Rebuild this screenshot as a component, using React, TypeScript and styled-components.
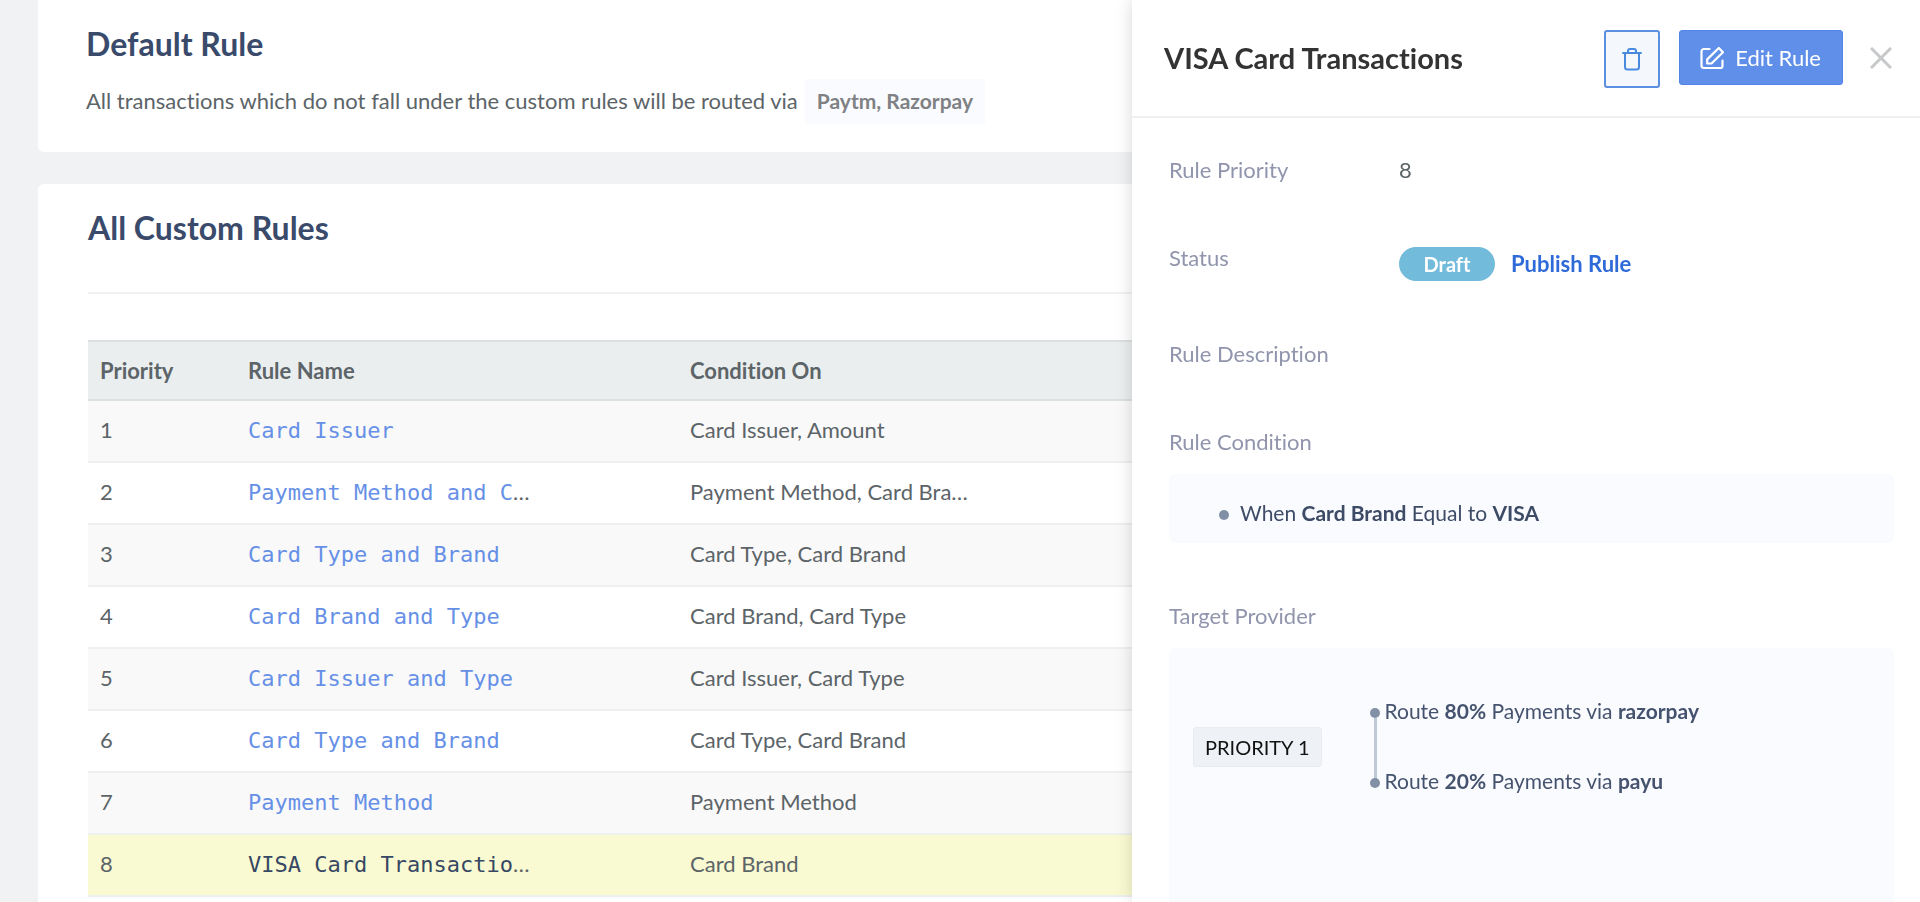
import React from "react";
import styled, { createGlobalStyle } from "styled-components";

const GlobalStyle = createGlobalStyle`
  *, *::before, *::after { box-sizing: border-box; }
  body {
    margin: 0;
    background: #f0f2f4;
    color: #5c6468;
    font-family: Lato, "Liberation Sans", sans-serif;
    font-size: 22px;
    line-height: 30px;
    font-variant-ligatures: none;
    overflow-x: hidden;
  }
  button { font: inherit; font-variant-ligatures: none; cursor: pointer; }
`;

const Page = styled.main`
  display: flex;
  flex-direction: column;
  gap: 32px;
  min-height: 100vh;
  padding: 0 38px;
`;

const Card = styled.section<{ $first?: boolean }>`
  flex: ${(p) => (p.$first ? "none" : "1")};
  background: #fff;
  border-radius: ${(p) => (p.$first ? "0 0 6px 6px" : "6px 6px 0 0")};
  padding: ${(p) => (p.$first ? "24px 48px 28px" : "24px 50px 0")};
`;

const CardTitle = styled.h2`
  margin: 0;
  font-size: 32px;
  line-height: 40px;
  font-weight: 700;
  color: #3a4a6b;
`;

const DefaultText = styled.p`
  display: flex;
  align-items: baseline;
  gap: 7px;
  margin: 15px 0 0;
`;

const ProviderChip = styled.strong`
  padding: 7px 12px 8px;
  background: #fafbff;
  color: #7f8183;
  font-size: 21px;
`;

const Divider = styled.hr`
  height: 2px;
  margin: 44px 0 46px;
  border: 0;
  background: #f0f1f1;
`;

const Table = styled.table`
  width: 100%;
  table-layout: fixed;
  border-collapse: separate;
  border-spacing: 0;
  text-align: left;
`;

const HeadCell = styled.th<{ $width?: string }>`
  width: ${(p) => p.$width ?? "auto"};
  height: 61px;
  padding: 0 12px;
  background: #eaeeef;
  border-top: 2px solid #dbe0e1;
  border-bottom: 2px solid #dbe0e1;
  font-weight: 700;
`;

const Row = styled.tr<{ $active?: boolean }>`
  background: ${(p) => (p.$active ? "#fafad2" : "#fff")};
  &:nth-child(odd) {
    background: #f9f9f9;
  }
`;

const Cell = styled.td`
  height: 62px;
  padding: 0 12px 2px;
  border-bottom: 2px solid #eeefef;
  white-space: nowrap;
`;

const RuleLink = styled.a<{ $active?: boolean }>`
  color: ${(p) => (p.$active ? "#364863" : "#6690e6")};
  font-family: "DejaVu Sans Mono", monospace;
  text-decoration: none;
`;

const Drawer = styled.aside`
  position: fixed;
  top: 0;
  right: 0;
  bottom: 0;
  display: flex;
  flex-direction: column;
  width: 788px;
  max-width: 100%;
  background: #fff;
  box-shadow: 0 0 16px rgba(0, 0, 0, 0.16);
  overflow: hidden;
`;

const DrawerHeader = styled.header`
  display: flex;
  align-items: flex-start;
  flex: none;
  height: 118px;
  padding: 30px 28px 0 32px;
  border-bottom: 2px solid #eeefef;
`;

const DrawerTitle = styled.h1`
  flex: 1;
  margin: 8px 0 0;
  font-size: 29px;
  line-height: 40px;
  font-weight: 700;
  color: #333;
`;

const DeleteButton = styled.button`
  display: grid;
  place-items: center;
  width: 56px;
  height: 58px;
  margin-right: 19px;
  padding: 0;
  border: 2px solid #5b8fe0;
  border-radius: 3px;
  background: #f4f8fd;
  color: #4a8add;
`;

const EditButton = styled.button`
  display: flex;
  align-items: center;
  gap: 10px;
  height: 55px;
  padding: 0 21px 0 20px;
  border: 1px solid #5283e6;
  border-radius: 3px;
  background: #5f8fe8;
  color: #fff;
`;

const CloseButton = styled.button`
  display: grid;
  place-items: center;
  height: 55px;
  margin-left: 27px;
  padding: 0;
  border: 0;
  background: none;
  color: #c6c8c9;
`;

const DrawerBody = styled.div`
  display: flex;
  flex-direction: column;
  flex: 1;
  gap: 58px;
  padding: 37px 26px 0 37px;
`;

const Field = styled.div`
  display: grid;
  grid-template-columns: 230px 1fr;
`;

const Label = styled.div`
  color: #9095ad;
`;

const StatusValue = styled.div`
  display: flex;
  align-items: center;
  gap: 16px;
  padding-top: 4px;
`;

const StatusBadge = styled.span`
  width: 96px;
  border-radius: 18px;
  background: #73bbdb;
  color: #fff;
  font-size: 20px;
  line-height: 34px;
  font-weight: 700;
  text-align: center;
`;

const PublishLink = styled.a`
  color: #2f6bd8;
  font-weight: 700;
  text-decoration: none;
`;

const Section = styled.section<{ $grow?: boolean }>`
  display: flex;
  flex-direction: column;
  flex: ${(p) => (p.$grow ? "1" : "none")};
  gap: 17px;
`;

const ConditionBox = styled.ul`
  margin: 0;
  padding: 24px 50px 15px;
  border-radius: 6px;
  background: #fafbfe;
  color: #3d4b66;
  font-size: 21px;
  list-style: none;
`;

const ConditionItem = styled.li`
  display: flex;
  align-items: center;
  gap: 11px;
`;

const Dot = styled.span`
  flex: none;
  width: 10px;
  height: 10px;
  margin-top: 4px;
  border-radius: 50%;
  background: #8290a5;
`;

const ProviderBox = styled.div`
  display: flex;
  align-items: flex-start;
  flex: 1;
  gap: 48px;
  padding: 48px 24px;
  border-radius: 6px 6px 0 0;
  background: #fafbfe;
`;

const PriorityTag = styled.span`
  margin-top: 31px;
  padding: 4px 11px;
  border: 1px solid #e8ecf0;
  border-radius: 3px;
  background: #eef1f5;
  color: #111;
  font-size: 20px;
`;

const RouteList = styled.ul`
  margin: 0;
  padding: 0;
  list-style: none;
  color: #45536f;
  font-size: 21px;
`;

const RouteItem = styled.li`
  position: relative;
  display: flex;
  align-items: center;
  gap: 5px;

  & + & {
    margin-top: 40px;
  }
  &:not(:last-child)::after {
    content: "";
    position: absolute;
    top: 22px;
    left: 4px;
    width: 3px;
    height: 62px;
    background: #c1c8d6;
  }
`;

const TrashIcon = () => (
  <svg width="20" height="24" viewBox="0 0 20 24" fill="none" stroke="currentColor" strokeWidth="2" strokeLinecap="round" strokeLinejoin="round" aria-hidden="true">
    <path d="M1 6h18M6 6V4.200C6 2.800 7 2 8 2h4c1 0 2 .8 2 2.200V6M3 6v14c0 1.500 1 2.500 2.500 2.500h9c1.500 0 2.500-1 2.500-2.500V6" />
  </svg>
);

const EditIcon = () => (
  <svg width="25" height="24" viewBox="0 0 25 24" fill="none" stroke="currentColor" strokeWidth="2.2" strokeLinejoin="round" strokeLinecap="round" aria-hidden="true">
    <path d="M9.500 3H4a2.500 2.500 0 0 0-2.500 2.500v14A2.500 2.500 0 0 0 4 22h16.500a2 2 0 0 0 2-2v-5.500" />
    <path d="M18.800 2 23 6.200 11.500 17.500H7.200V13.400Z" />
  </svg>
);

const CloseIcon = () => (
  <svg width="22" height="22" viewBox="0 0 22 22" fill="none" stroke="currentColor" strokeWidth="3" aria-hidden="true">
    <path d="M1 1l20 20M21 1L1 21" />
  </svg>
);

const NAME_LIMIT = 20;
const CONDITION_LIMIT = 24;

const rules = [
  { name: "Card Issuer", on: "Card Issuer, Amount" },
  { name: "Payment Method and Card Brand", on: "Payment Method, Card Brand" },
  { name: "Card Type and Brand", on: "Card Type, Card Brand" },
  { name: "Card Brand and Type", on: "Card Brand, Card Type" },
  { name: "Card Issuer and Type", on: "Card Issuer, Card Type" },
  { name: "Card Type and Brand", on: "Card Type, Card Brand" },
  { name: "Payment Method", on: "Payment Method" },
  { name: "VISA Card Transactions", on: "Card Brand" },
];

const routes = [
  { share: "80%", provider: "razorpay" },
  { share: "20%", provider: "payu" },
];

const selectedPriority = 8;

export default function App() {
  return (
    <>
      <GlobalStyle />
      <Page>
        <Card $first>
          <CardTitle>Default Rule</CardTitle>
          <DefaultText>
            All transactions which do not fall under the custom rules will be routed via
            <ProviderChip>Paytm, Razorpay</ProviderChip>
          </DefaultText>
        </Card>
        <Card>
          <CardTitle>All Custom Rules</CardTitle>
          <Divider />
          <Table>
            <thead>
              <tr>
                <HeadCell scope="col" $width="148px">Priority</HeadCell>
                <HeadCell scope="col" $width="442px">Rule Name</HeadCell>
                <HeadCell scope="col">Condition On</HeadCell>
              </tr>
            </thead>
            <tbody>
              {rules.map((rule, i) => {
                const active = i + 1 === selectedPriority;
                return (
                  <Row key={i} $active={active}>
                    <Cell>{i + 1}</Cell>
                    <Cell>
                      <RuleLink href="#" $active={active}>
                        {rule.name.slice(0, NAME_LIMIT)}
                      </RuleLink>
                      {rule.name.length > NAME_LIMIT && "…"}
                    </Cell>
                    <Cell>
                      {rule.on.slice(0, CONDITION_LIMIT)}
                      {rule.on.length > CONDITION_LIMIT && "…"}
                    </Cell>
                  </Row>
                );
              })}
            </tbody>
          </Table>
        </Card>
      </Page>

      <Drawer>
        <DrawerHeader>
          <DrawerTitle>VISA Card Transactions</DrawerTitle>
          <DeleteButton type="button" aria-label="Delete rule">
            <TrashIcon />
          </DeleteButton>
          <EditButton type="button">
            <EditIcon />
            Edit Rule
          </EditButton>
          <CloseButton type="button" aria-label="Close">
            <CloseIcon />
          </CloseButton>
        </DrawerHeader>
        <DrawerBody>
          <Field>
            <Label>Rule Priority</Label>
            <div>8</div>
          </Field>
          <Field>
            <Label>Status</Label>
            <StatusValue>
              <StatusBadge>Draft</StatusBadge>
              <PublishLink href="#">Publish Rule</PublishLink>
            </StatusValue>
          </Field>
          <Field>
            <Label>Rule Description</Label>
          </Field>
          <Section>
            <Label>Rule Condition</Label>
            <ConditionBox>
              <ConditionItem>
                <Dot />
                <span>
                  When <b>Card Brand</b> Equal to <b>VISA</b>
                </span>
              </ConditionItem>
            </ConditionBox>
          </Section>
          <Section $grow>
            <Label>Target Provider</Label>
            <ProviderBox>
              <PriorityTag>PRIORITY 1</PriorityTag>
              <RouteList>
                {routes.map((route) => (
                  <RouteItem key={route.provider}>
                    <Dot />
                    <span>
                      Route <b>{route.share}</b> Payments via <b>{route.provider}</b>
                    </span>
                  </RouteItem>
                ))}
              </RouteList>
            </ProviderBox>
          </Section>
        </DrawerBody>
      </Drawer>
    </>
  );
}
